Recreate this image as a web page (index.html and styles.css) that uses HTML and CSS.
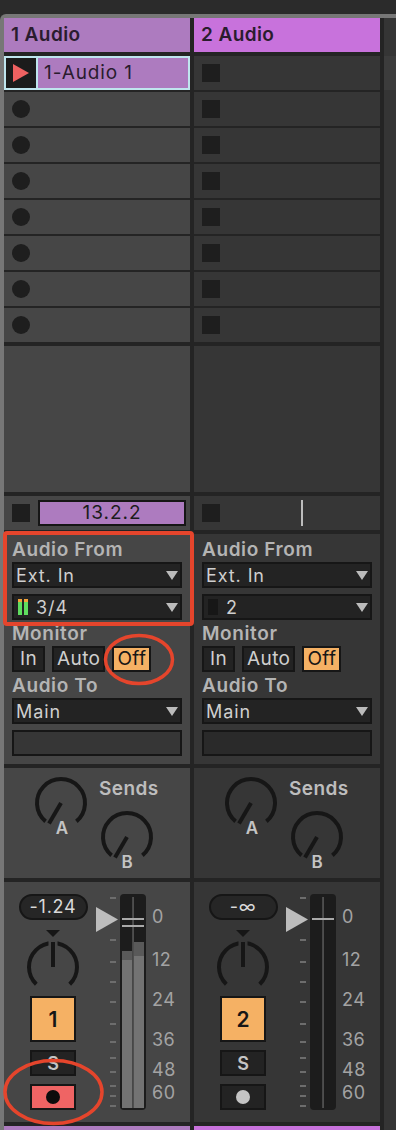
FILE: index.html
```html
<!DOCTYPE html>
<html lang="en">
<head>
    <meta charset="UTF-8">
    <title>Session View</title>
    <link rel="stylesheet" href="styles.css">
</head>
<body>
    <div class="session">
        <!-- Track 1 -->
        <div class="track track-1">
            <div class="track-header">1 Audio</div>

            <div class="slots">
                <div class="slot clip">
                    <div class="clip-launch"><i class="play"></i></div>
                    <div class="clip-name">1-Audio 1</div>
                </div>
                <div class="slot"><i class="rec"></i></div>
                <div class="slot"><i class="rec"></i></div>
                <div class="slot"><i class="rec"></i></div>
                <div class="slot"><i class="rec"></i></div>
                <div class="slot"><i class="rec"></i></div>
                <div class="slot"><i class="rec"></i></div>
                <div class="slot"><i class="rec"></i></div>
            </div>

            <div class="spacer"></div>

            <div class="stop-row">
                <i class="stop"></i>
                <div class="position">13.2.2</div>
            </div>

            <div class="io">
                <div class="io-label">Audio From</div>
                <div class="select"><span>Ext. In</span><i class="caret"></i></div>
                <div class="select">
                    <span class="level"><b></b><b></b></span>
                    <span>3/4</span><i class="caret"></i>
                </div>
                <div class="io-label">Monitor</div>
                <div class="monitor">
                    <button class="mon-btn">In</button>
                    <button class="mon-btn">Auto</button>
                    <button class="mon-btn on">Off</button>
                </div>
                <div class="io-label">Audio To</div>
                <div class="select"><span>Main</span><i class="caret"></i></div>
                <div class="select blank"></div>
            </div>

            <div class="sends">
                <svg class="knob" width="56" height="64" viewBox="0 0 56 64">
                    <path d="M12.6 46.4 A24 24 0 1 1 43.4 46.4" />
                    <line x1="28" y1="28" x2="16" y2="48.5" />
                    <text x="29" y="59" text-anchor="middle">A</text>
                </svg>
                <div class="send-col">
                    <div class="sends-label">Sends</div>
                    <svg class="knob knob-b" width="56" height="64" viewBox="0 0 56 64">
                        <path d="M12.6 46.4 A24 24 0 1 1 43.4 46.4" />
                        <line x1="28" y1="28" x2="16" y2="48.5" />
                        <text x="28" y="59" text-anchor="middle">B</text>
                    </svg>
                </div>
            </div>

            <div class="mixer">
                <div class="mix-left">
                    <div class="volume">-1.24</div>
                    <svg class="pan" width="56" height="62" viewBox="0 0 56 62">
                        <polygon class="pan-mark" points="21,0 35,0 28,7" />
                        <path d="M11.3 54.3 A24 24 0 1 1 44.7 54.3" />
                        <line class="pan-gap" x1="28" y1="10" x2="28" y2="17" />
                        <line x1="28" y1="12" x2="28" y2="37" />
                    </svg>
                    <div class="activator">1</div>
                    <div class="solo">S</div>
                    <div class="arm on"><i class="arm-dot"></i></div>
                </div>
                <svg class="fader" width="50" height="218" viewBox="0 0 50 218">
                    <g class="ticks">
                        <rect x="14" y="3" width="6" height="2" />
                        <rect x="14" y="45" width="6" height="2" />
                        <rect x="14" y="67" width="6" height="2" />
                        <rect x="14" y="87" width="6" height="2" />
                        <rect x="14" y="107" width="6" height="2" />
                        <rect x="14" y="129" width="6" height="2" />
                        <rect x="14" y="147" width="6" height="2" />
                        <rect x="14" y="163" width="6" height="2" />
                        <rect x="14" y="177" width="6" height="2" />
                        <rect x="14" y="191" width="6" height="2" />
                        <rect x="14" y="201" width="6" height="2" />
                        <rect x="14" y="211" width="6" height="2" />
                    </g>
                    <polygon class="vol-arrow" points="0,13 22,25.5 0,38" />
                    <rect class="meter-bg" x="24" y="0" width="26" height="216" rx="4" />
                    <rect class="meter-dim" x="26" y="57" width="10" height="157" />
                    <rect class="meter-fill" x="26" y="66" width="10" height="148" />
                    <rect class="meter-dim" x="38" y="48" width="10" height="166" />
                    <rect class="meter-fill" x="38" y="62" width="10" height="152" />
                    <rect class="meter-mid" x="36.3" y="3" width="1.5" height="211" />
                    <rect class="meter-peak" x="26" y="24" width="22" height="2" />
                    <rect class="meter-peak" x="26" y="31" width="22" height="2" />
                </svg>
                <div class="scale">
                    <span class="db-0">0</span>
                    <span class="db-12">12</span>
                    <span class="db-24">24</span>
                    <span class="db-36">36</span>
                    <span class="db-48">48</span>
                    <span class="db-60">60</span>
                </div>
            </div>

            <div class="color-strip"></div>
        </div>

        <!-- Track 2 -->
        <div class="track track-2">
            <div class="track-header">2 Audio</div>

            <div class="slots">
                <div class="slot"><i class="stop"></i></div>
                <div class="slot"><i class="stop"></i></div>
                <div class="slot"><i class="stop"></i></div>
                <div class="slot"><i class="stop"></i></div>
                <div class="slot"><i class="stop"></i></div>
                <div class="slot"><i class="stop"></i></div>
                <div class="slot"><i class="stop"></i></div>
                <div class="slot"><i class="stop"></i></div>
            </div>

            <div class="spacer"></div>

            <div class="stop-row">
                <i class="stop"></i>
                <div class="position idle"><i class="playhead"></i></div>
            </div>

            <div class="io">
                <div class="io-label">Audio From</div>
                <div class="select"><span>Ext. In</span><i class="caret"></i></div>
                <div class="select">
                    <span class="level idle"><b></b></span>
                    <span>2</span><i class="caret"></i>
                </div>
                <div class="io-label">Monitor</div>
                <div class="monitor">
                    <button class="mon-btn">In</button>
                    <button class="mon-btn">Auto</button>
                    <button class="mon-btn on">Off</button>
                </div>
                <div class="io-label">Audio To</div>
                <div class="select"><span>Main</span><i class="caret"></i></div>
                <div class="select blank"></div>
            </div>

            <div class="sends">
                <svg class="knob" width="56" height="64" viewBox="0 0 56 64">
                    <path d="M12.6 46.4 A24 24 0 1 1 43.4 46.4" />
                    <line x1="28" y1="28" x2="16" y2="48.5" />
                    <text x="29" y="59" text-anchor="middle">A</text>
                </svg>
                <div class="send-col">
                    <div class="sends-label">Sends</div>
                    <svg class="knob knob-b" width="56" height="64" viewBox="0 0 56 64">
                        <path d="M12.6 46.4 A24 24 0 1 1 43.4 46.4" />
                        <line x1="28" y1="28" x2="16" y2="48.5" />
                        <text x="28" y="59" text-anchor="middle">B</text>
                    </svg>
                </div>
            </div>

            <div class="mixer">
                <div class="mix-left">
                    <div class="volume">-∞</div>
                    <svg class="pan" width="56" height="62" viewBox="0 0 56 62">
                        <polygon class="pan-mark" points="21,0 35,0 28,7" />
                        <path d="M11.3 54.3 A24 24 0 1 1 44.7 54.3" />
                        <line class="pan-gap" x1="28" y1="10" x2="28" y2="17" />
                        <line x1="28" y1="12" x2="28" y2="37" />
                    </svg>
                    <div class="activator">2</div>
                    <div class="solo">S</div>
                    <div class="arm"><i class="arm-dot"></i></div>
                </div>
                <svg class="fader" width="50" height="218" viewBox="0 0 50 218">
                    <g class="ticks">
                        <rect x="14" y="3" width="6" height="2" />
                        <rect x="14" y="45" width="6" height="2" />
                        <rect x="14" y="67" width="6" height="2" />
                        <rect x="14" y="87" width="6" height="2" />
                        <rect x="14" y="107" width="6" height="2" />
                        <rect x="14" y="129" width="6" height="2" />
                        <rect x="14" y="147" width="6" height="2" />
                        <rect x="14" y="163" width="6" height="2" />
                        <rect x="14" y="177" width="6" height="2" />
                        <rect x="14" y="191" width="6" height="2" />
                        <rect x="14" y="201" width="6" height="2" />
                        <rect x="14" y="211" width="6" height="2" />
                    </g>
                    <polygon class="vol-arrow" points="0,13 22,25.5 0,38" />
                    <rect class="meter-bg" x="24" y="0" width="26" height="216" rx="4" />
                    <rect class="meter-mid" x="36.3" y="3" width="1.5" height="211" />
                    <rect class="meter-peak" x="26" y="24" width="22" height="2" />
                </svg>
                <div class="scale">
                    <span class="db-0">0</span>
                    <span class="db-12">12</span>
                    <span class="db-24">24</span>
                    <span class="db-36">36</span>
                    <span class="db-48">48</span>
                    <span class="db-60">60</span>
                </div>
            </div>

            <div class="color-strip"></div>
        </div>

        <div class="rest"></div>
    </div>

    <!-- red markup drawn over the screenshot -->
    <svg class="marks" width="396" height="1130" viewBox="0 0 396 1130">
        <rect x="5" y="533" width="187" height="91" rx="2" />
        <ellipse cx="139" cy="659.5" rx="33.5" ry="24" />
        <ellipse cx="53.5" cy="1092" rx="48.5" ry="31.5" />
    </svg>
</body>
</html>
```

FILE: styles.css
```css
* {
    box-sizing: border-box;
}

body {
    margin: 0;
    width: 396px;
    height: 1130px;
    overflow: hidden;
    position: relative;
    background: #2b2b2b;
    font-family: Inter, "Noto Sans", sans-serif;
}

/* session frame */
.session {
    margin-top: 14px;
    height: 1116px;
    border-top: 4px solid #777;
    border-left: 4px solid #777;
    border-top-left-radius: 6px;
    background: #242424;
    display: grid;
    grid-template-columns: 186px 186px 12px;
    column-gap: 4px;
}

.track {
    display: flex;
    flex-direction: column;
    gap: 4px;
}

.track-1 {
    --cell: #464646;
    --color: #ad7bbf;
}

.track-2 {
    --cell: #363636;
    --color: #c872dc;
}

.rest {
    background: linear-gradient(#353535 0 38px, #3c3c3c 38px 72px, #353535 72px);
}

/* header */
.track-header {
    height: 34px;
    background: var(--color);
    padding-left: 7px;
    font-size: 19px;
    font-weight: 600;
    letter-spacing: 0.4px;
    line-height: 34px;
    color: #2a1c2e;
}

/* clip slots */
.slots {
    display: flex;
    flex-direction: column;
    gap: 2px;
}

.slot {
    height: 34px;
    background: var(--cell);
    display: flex;
    align-items: center;
    padding-left: 8px;
}

.rec {
    width: 18px;
    height: 18px;
    border-radius: 50%;
    background: #1e1e1e;
}

.stop {
    width: 18px;
    height: 18px;
    background: #1e1e1e;
}

.slot.clip {
    padding: 0;
    border: 2px solid #bfe5ee;
    align-items: stretch;
}

.clip-launch {
    width: 32px;
    background: #1b1b1b;
    border-right: 2px solid #bfe5ee;
    display: flex;
    align-items: center;
    justify-content: center;
}

.play {
    border-left: 16px solid #ef6161;
    border-top: 9px solid transparent;
    border-bottom: 9px solid transparent;
}

.clip-name {
    flex: 1;
    background: var(--color);
    padding-left: 6px;
    font-size: 19px;
    letter-spacing: 0.9px;
    line-height: 30px;
    color: #2a1c2e;
}

.spacer {
    height: 146px;
    background: var(--cell);
}

/* clip stop / position row */
.stop-row {
    height: 34px;
    background: var(--cell);
    display: flex;
    align-items: center;
    gap: 8px;
    padding-left: 8px;
}

.position {
    width: 148px;
    height: 26px;
    border: 2px solid #161616;
    background: var(--color);
    text-align: center;
    font-size: 19px;
    letter-spacing: 1px;
    line-height: 22px;
    color: #1c1c1c;
}

.position.idle {
    border: none;
    background: none;
    display: flex;
    justify-content: center;
}

.playhead {
    width: 2px;
    height: 26px;
    background: #bdbdbd;
}

/* input / output */
.io {
    height: 230px;
    background: var(--cell);
    padding: 6px 8px 0;
    display: flex;
    flex-direction: column;
}

.io-label {
    margin-top: 4px;
    font-size: 19px;
    font-weight: 600;
    letter-spacing: 0.6px;
    line-height: 20px;
    color: #b4b4b4;
}

.io-label:first-child {
    margin-top: 0;
}

.select {
    height: 26px;
    margin-top: 2px;
    border: 2px solid #161616;
    background: #232323;
    display: flex;
    align-items: center;
    padding: 0 2px;
    font-size: 18px;
    letter-spacing: 0.9px;
    color: #cfcfcf;
}

.select + .select {
    margin-top: 6px;
}

.select.blank {
    background: rgba(0, 0, 0, 0.22);
}

.caret {
    margin-left: auto;
    border-left: 6.5px solid transparent;
    border-right: 6.5px solid transparent;
    border-top: 9px solid #bcbcbc;
}

.level {
    display: flex;
    gap: 2px;
    margin: 0 8px 0 2px;
}

.level b {
    width: 4px;
    height: 16px;
    background: linear-gradient(#f2a33a 0 3px, #5fdd5f 3px);
}

.level.idle b {
    width: 10px;
    background: #171717;
}

.monitor {
    margin-top: 2px;
    display: flex;
    gap: 7px;
}

.mon-btn {
    margin: 0;
    min-width: 33px;
    height: 26px;
    padding: 0 3px;
    border: 2px solid #161616;
    background: #232323;
    font-family: inherit;
    font-size: 19px;
    letter-spacing: 0.4px;
    line-height: 22px;
    color: #cfcfcf;
}

.mon-btn.on {
    background: #f5b164;
    color: #161616;
}

/* sends */
.sends {
    height: 110px;
    background: var(--cell);
    display: flex;
    padding: 7px 0 0 29px;
}

.send-col {
    margin-left: 10px;
    display: flex;
    flex-direction: column;
}

.sends-label {
    margin-top: 3px;
    font-size: 19px;
    font-weight: 600;
    letter-spacing: 0.4px;
    line-height: 22px;
    color: #bdbdbd;
}

.knob {
    overflow: visible;
}

.knob-b {
    margin-top: 9px;
}

.knob path,
.knob line,
.pan path,
.pan line {
    fill: none;
    stroke: #161616;
    stroke-width: 4;
}

.knob text {
    font-family: Inter, "Noto Sans", sans-serif;
    font-size: 17px;
    font-weight: 600;
    fill: #c4c4c4;
}

/* mixer */
.mixer {
    height: 240px;
    background: var(--cell);
    display: flex;
    padding: 12px 0 0 14px;
}

.mix-left {
    width: 70px;
    display: flex;
    flex-direction: column;
    align-items: center;
}

.volume {
    width: 69px;
    height: 26px;
    border: 2px solid #161616;
    border-radius: 13px;
    background: #262626;
    text-align: center;
    font-size: 18px;
    letter-spacing: 0.8px;
    line-height: 22px;
    color: #d9d9d9;
}

.pan {
    display: block;
    margin-top: 10px;
}

.pan-mark {
    fill: #161616;
}

.pan .pan-gap {
    stroke: var(--cell);
    stroke-width: 9;
}

.activator {
    margin-top: 4px;
    width: 46px;
    height: 46px;
    border: 2px solid #161616;
    background: #f5b164;
    display: flex;
    align-items: center;
    justify-content: center;
    font-size: 21px;
    font-weight: 600;
    color: #161616;
}

.solo,
.arm {
    margin-top: 8px;
    width: 46px;
    height: 26px;
    border: 2px solid #161616;
    background: #232323;
    display: flex;
    align-items: center;
    justify-content: center;
}

.solo {
    font-size: 18px;
    font-weight: 600;
    color: #c4c4c4;
}

.arm.on {
    background: #ef6464;
}

.arm-dot {
    width: 14px;
    height: 14px;
    border-radius: 50%;
    background: #c4c4c4;
}

.arm.on .arm-dot {
    background: #0c0c0c;
}

.fader {
    display: block;
    margin-left: 8px;
}

.ticks rect {
    fill: #6d6d6d;
}

.vol-arrow {
    fill: #bdbdbd;
}

.meter-bg {
    fill: #1c1c1c;
}

.meter-dim {
    fill: #595959;
}

.meter-fill {
    fill: #737373;
}

.meter-mid {
    fill: #5b5b5b;
}

.meter-peak {
    fill: #a9a9a9;
}

.scale {
    position: relative;
    margin-left: 6px;
    width: 30px;
    font-size: 18px;
    letter-spacing: 0.5px;
    color: #a3a3a3;
}

.scale span {
    position: absolute;
    left: 0;
    line-height: 20px;
}

.db-0 { top: 13px; }
.db-12 { top: 56px; }
.db-24 { top: 96px; }
.db-36 { top: 136px; }
.db-48 { top: 166px; }
.db-60 { top: 189px; }

.color-strip {
    height: 4px;
    background: var(--color);
}

/* annotation overlay */
.marks {
    position: absolute;
    top: 0;
    left: 0;
    pointer-events: none;
}

.marks rect,
.marks ellipse {
    fill: none;
    stroke: #e5452c;
    stroke-width: 4;
}

.marks ellipse {
    stroke-width: 3.5;
}
```
